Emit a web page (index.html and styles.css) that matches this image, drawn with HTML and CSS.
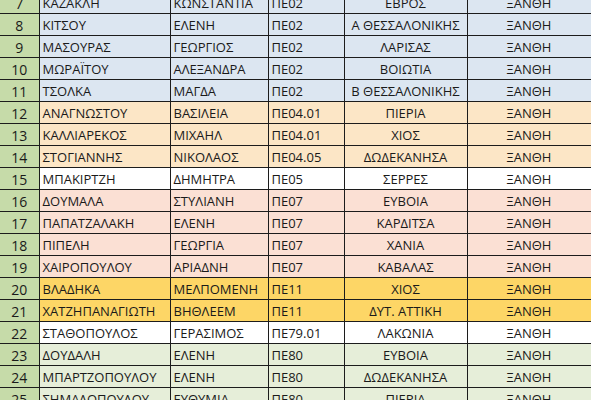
FILE: index.html
```html
<!DOCTYPE html>
<html lang="el">
<head>
    <meta charset="UTF-8">
    <meta name="viewport" content="width=device-width, initial-scale=1.0">
    <title>Πίνακας τοποθετήσεων</title>
    <link rel="stylesheet" href="styles.css">
</head>
<body>
    <div class="sheet">
        <table class="grid">
            <colgroup>
                <col class="c-num"><col class="c-last"><col class="c-first"><col class="c-spec"><col class="c-area"><col class="c-city">
            </colgroup>
            <tbody>
                <tr class="blue"><td class="num">7</td><td>ΚΑΖΑΚΛΗ</td><td>ΚΩΝΣΤΑΝΤΙΑ</td><td>ΠΕ02</td><td class="mid">ΕΒΡΟΣ</td><td class="mid">ΞΑΝΘΗ</td></tr>
                <tr class="blue"><td class="num">8</td><td>ΚΙΤΣΟΥ</td><td>ΕΛΕΝΗ</td><td>ΠΕ02</td><td class="mid">Α ΘΕΣΣΑΛΟΝΙΚΗΣ</td><td class="mid">ΞΑΝΘΗ</td></tr>
                <tr class="blue"><td class="num">9</td><td>ΜΑΣΟΥΡΑΣ</td><td>ΓΕΩΡΓΙΟΣ</td><td>ΠΕ02</td><td class="mid">ΛΑΡΙΣΑΣ</td><td class="mid">ΞΑΝΘΗ</td></tr>
                <tr class="blue"><td class="num">10</td><td>ΜΩΡΑΪΤΟΥ</td><td>ΑΛΕΞΑΝΔΡΑ</td><td>ΠΕ02</td><td class="mid">ΒΟΙΩΤΙΑ</td><td class="mid">ΞΑΝΘΗ</td></tr>
                <tr class="blue"><td class="num">11</td><td>ΤΣΟΛΚΑ</td><td>ΜΑΓΔΑ</td><td>ΠΕ02</td><td class="mid">Β ΘΕΣΣΑΛΟΝΙΚΗΣ</td><td class="mid">ΞΑΝΘΗ</td></tr>
                <tr class="peach"><td class="num">12</td><td>ΑΝΑΓΝΩΣΤΟΥ</td><td>ΒΑΣΙΛΕΙΑ</td><td>ΠΕ04.01</td><td class="mid">ΠΙΕΡΙΑ</td><td class="mid">ΞΑΝΘΗ</td></tr>
                <tr class="peach"><td class="num">13</td><td>ΚΑΛΛΙΑΡΕΚΟΣ</td><td>ΜΙΧΑΗΛ</td><td>ΠΕ04.01</td><td class="mid">ΧΙΟΣ</td><td class="mid">ΞΑΝΘΗ</td></tr>
                <tr class="peach"><td class="num">14</td><td>ΣΤΟΓΙΑΝΝΗΣ</td><td>ΝΙΚΟΛΑΟΣ</td><td>ΠΕ04.05</td><td class="mid">ΔΩΔΕΚΑΝΗΣΑ</td><td class="mid">ΞΑΝΘΗ</td></tr>
                <tr class="plain"><td class="num">15</td><td>ΜΠΑΚΙΡΤΖΗ</td><td>ΔΗΜΗΤΡΑ</td><td>ΠΕ05</td><td class="mid">ΣΕΡΡΕΣ</td><td class="mid">ΞΑΝΘΗ</td></tr>
                <tr class="pink"><td class="num">16</td><td>ΔΟΥΜΑΛΑ</td><td>ΣΤΥΛΙΑΝΗ</td><td>ΠΕ07</td><td class="mid">ΕΥΒΟΙΑ</td><td class="mid">ΞΑΝΘΗ</td></tr>
                <tr class="pink"><td class="num">17</td><td>ΠΑΠΑΤΖΑΛΑΚΗ</td><td>ΕΛΕΝΗ</td><td>ΠΕ07</td><td class="mid">ΚΑΡΔΙΤΣΑ</td><td class="mid">ΞΑΝΘΗ</td></tr>
                <tr class="pink"><td class="num">18</td><td>ΠΙΠΕΛΗ</td><td>ΓΕΩΡΓΙΑ</td><td>ΠΕ07</td><td class="mid">ΧΑΝΙΑ</td><td class="mid">ΞΑΝΘΗ</td></tr>
                <tr class="pink"><td class="num">19</td><td>ΧΑΙΡΟΠΟΥΛΟΥ</td><td>ΑΡΙΑΔΝΗ</td><td>ΠΕ07</td><td class="mid">ΚΑΒΑΛΑΣ</td><td class="mid">ΞΑΝΘΗ</td></tr>
                <tr class="gold"><td class="num">20</td><td>ΒΛΑΔΗΚΑ</td><td>ΜΕΛΠΟΜΕΝΗ</td><td>ΠΕ11</td><td class="mid">ΧΙΟΣ</td><td class="mid">ΞΑΝΘΗ</td></tr>
                <tr class="gold"><td class="num">21</td><td>ΧΑΤΖΗΠΑΝΑΓΙΩΤΗ</td><td>ΒΗΘΛΕΕΜ</td><td>ΠΕ11</td><td class="mid">ΔΥΤ. ΑΤΤΙΚΗ</td><td class="mid">ΞΑΝΘΗ</td></tr>
                <tr class="plain"><td class="num">22</td><td>ΣΤΑΘΟΠΟΥΛΟΣ</td><td>ΓΕΡΑΣΙΜΟΣ</td><td>ΠΕ79.01</td><td class="mid">ΛΑΚΩΝΙΑ</td><td class="mid">ΞΑΝΘΗ</td></tr>
                <tr class="green"><td class="num">23</td><td>ΔΟΥΔΑΛΗ</td><td>ΕΛΕΝΗ</td><td>ΠΕ80</td><td class="mid">ΕΥΒΟΙΑ</td><td class="mid">ΞΑΝΘΗ</td></tr>
                <tr class="green"><td class="num">24</td><td>ΜΠΑΡΤΖΟΠΟΥΛΟΥ</td><td>ΕΛΕΝΗ</td><td>ΠΕ80</td><td class="mid">ΔΩΔΕΚΑΝΗΣΑ</td><td class="mid">ΞΑΝΘΗ</td></tr>
                <tr class="green"><td class="num">25</td><td>ΣΗΜΑΔΟΠΟΥΛΟΥ</td><td>ΕΥΘΥΜΙΑ</td><td>ΠΕ80</td><td class="mid">ΠΙΕΡΙΑ</td><td class="mid">ΞΑΝΘΗ</td></tr>
            </tbody>
        </table>
    </div>
</body>
</html>
```
FILE: styles.css
```css
body {
    margin: 0;
    background: #ffffff;
    font-family: "Open Sans", "Liberation Sans", Arial, sans-serif;
    overflow: hidden;
}
.sheet {
    width: 591px;
    height: 400px;
    overflow: hidden;
}
.grid {
    border-collapse: collapse;
    table-layout: fixed;
    width: 591px;
    margin-top: -9px;
    font-size: 13px;
    color: #1a1a1a;
}
.c-num { width: 39px; }
.c-last { width: 131px; }
.c-first { width: 98px; }
.c-spec { width: 76px; }
.c-area { width: 123px; }
.c-city { width: 124px; }
.grid td {
    height: 19px;
    padding: 2px 3px 0;
    border: 1px solid #1c1c1c;
    white-space: nowrap;
    overflow: hidden;
    line-height: 19px;
}
.grid td.num {
    text-align: center;
    font-size: 14px;
    background: #c6dba9;
    border-left: none;
}
.grid td.mid {
    text-align: center;
}
.blue td { background: #dce6f1; }
.peach td { background: #fce6c6; }
.plain td { background: #ffffff; }
.pink td { background: #fbe0d4; }
.gold td { background: #fdd666; }
.green td { background: #e6eed9; }
```
